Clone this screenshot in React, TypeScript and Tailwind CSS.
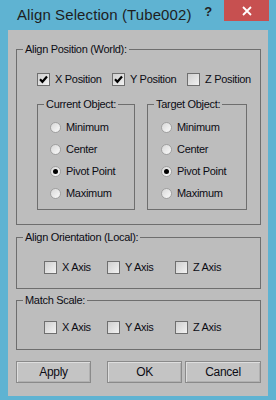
import React from 'react';

const Check: React.FC<{ label: string; checked?: boolean; w?: string }> = ({ label, checked, w }) => (
  <div className={`flex h-[13px] items-center ${w ?? ''}`}>
    <span className="flex h-[13px] w-[13px] shrink-0 items-center justify-center border border-[#6f6f6f] bg-gradient-to-br from-[#cfcfcf] to-[#f2f2f2]">
      {checked && (
        <svg width="9" height="9" viewBox="0 0 9 9">
          <path d="M1 4.3 L3.4 6.8 L8 1.6" fill="none" stroke="#000" strokeWidth="2.2" />
        </svg>
      )}
    </span>
    <span className="ml-[5px] whitespace-nowrap">{label}</span>
  </div>
);

const Radio: React.FC<{ label: string; on?: boolean }> = ({ label, on }) => (
  <div className="flex h-[22px] items-center">
    <span className="flex h-[11px] w-[11px] shrink-0 items-center justify-center rounded-full border border-[#a0a0a0] bg-gradient-to-br from-[#d8d8d8] to-[#fafafa]">
      {on && <span className="h-[5px] w-[5px] rounded-full bg-black" />}
    </span>
    <span className="ml-[5px] whitespace-nowrap">{label}</span>
  </div>
);

const Group: React.FC<{ label: string; className?: string; children: React.ReactNode }> = ({ label, className, children }) => (
  <fieldset className={`border border-[#6e6e6e] ${className ?? ''}`}>
    <legend className="ml-[6px] px-[2px] leading-[15px]">{label}</legend>
    {children}
  </fieldset>
);

const Btn: React.FC<{ label: string; w: string }> = ({ label, w }) => (
  <button className={`flex h-[22px] ${w} items-center justify-center border border-[#8a8a8a] bg-[#c4c4c4] text-[12px] shadow-[inset_1px_1px_0_#dedede,inset_-1px_-1px_0_#b0b0b0]`}>
    {label}
  </button>
);

const radios = ['Minimum', 'Center', 'Pivot Point', 'Maximum'];

export default function App() {
  return (
    <div className="flex h-[400px] w-[276px] flex-col bg-[#5fb3d2] font-['Liberation_Sans',Arial,sans-serif] text-[11px] tracking-[-0.3px] text-[#0c0c14]">
      {/* title bar */}
      <div className="flex h-[30px] shrink-0 items-start">
        <div className="pl-[17px] pt-[5px] text-[15px] leading-[20px] tracking-[0.1px] text-[#1e1e1e]">Align Selection (Tube002)</div>
        <div className="ml-auto flex items-start">
          <span className="mr-[12px] pt-[4px] text-[13px] font-bold leading-[16px] text-[#222]">?</span>
          <button className="mr-[7px] flex h-[21px] w-[45px] items-center justify-center bg-[#c75050]">
            <svg width="10" height="10" viewBox="0 0 10 10">
              <path d="M1 1 L9 9 M9 1 L1 9" stroke="#fff" strokeWidth="1.8" />
            </svg>
          </button>
        </div>
      </div>

      {/* client */}
      <div className="mx-[8px] mb-[4px] flex-1 bg-[#bdbdbd]">
        <Group label="Align Position (World):" className="ml-[8px] mr-[7px] mt-[12px]">
          <div className="mt-[16px] flex pl-[20px]">
            <Check label="X Position" checked w="w-[75px]" />
            <Check label="Y Position" checked w="w-[75px]" />
            <Check label="Z Position" />
          </div>
          <div className="mt-[11px] flex gap-[12px] pb-[14px] pl-[20px]">
            <Group label="Current Object:" className="w-[98px]">
              <div className="pb-[5px] pl-[12px] pt-[4px]">
                {radios.map(r => <Radio key={r} label={r} on={r === 'Pivot Point'} />)}
              </div>
            </Group>
            <Group label="Target Object:" className="w-[100px]">
              <div className="pb-[5px] pl-[13px] pt-[4px]">
                {radios.map(r => <Radio key={r} label={r} on={r === 'Pivot Point'} />)}
              </div>
            </Group>
          </div>
        </Group>

        <Group label="Align Orientation (Local):" className="ml-[8px] mr-[7px] mt-[5px]">
          <div className="mt-[16px] flex pb-[14px] pl-[27px]">
            <Check label="X Axis" w="w-[63px]" />
            <Check label="Y Axis" w="w-[68px]" />
            <Check label="Z Axis" />
          </div>
        </Group>

        <Group label="Match Scale:" className="ml-[8px] mr-[7px] mt-[4px]">
          <div className="mt-[13px] flex pb-[15px] pl-[27px]">
            <Check label="X Axis" w="w-[63px]" />
            <Check label="Y Axis" w="w-[68px]" />
            <Check label="Z Axis" />
          </div>
        </Group>

        <div className="ml-[8px] mt-[11px] flex">
          <Btn label="Apply" w="w-[75px]" />
          <div className="ml-[16px] flex gap-[3px]">
            <Btn label="OK" w="w-[75px]" />
            <Btn label="Cancel" w="w-[76px]" />
          </div>
        </div>
      </div>
    </div>
  );
}
